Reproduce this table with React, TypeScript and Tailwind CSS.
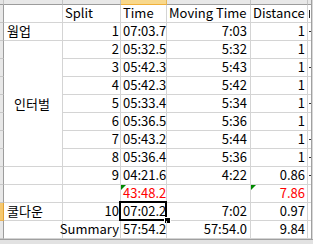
import React from 'react';

type Row = {
  a?: { text: string; kind: 'cell' | 'merge' } | null;
  b: string;
  c: string;
  d: string;
  e: string;
  f: 'dash' | '';
  red?: boolean;
  selected?: boolean;
};

const rows: Row[] = [
  { a: { text: '웜업', kind: 'cell' }, b: '1', c: '07:03.7', d: '7:03', e: '1', f: 'dash' },
  { a: { text: '인터벌', kind: 'merge' }, b: '2', c: '05:32.5', d: '5:32', e: '1', f: '' },
  { a: null, b: '3', c: '05:42.3', d: '5:43', e: '1', f: 'dash' },
  { a: null, b: '4', c: '05:42.3', d: '5:42', e: '1', f: '' },
  { a: null, b: '5', c: '05:33.4', d: '5:34', e: '1', f: 'dash' },
  { a: null, b: '6', c: '05:36.5', d: '5:36', e: '1', f: '' },
  { a: null, b: '7', c: '05:43.2', d: '5:44', e: '1', f: 'dash' },
  { a: null, b: '8', c: '05:36.4', d: '5:36', e: '1', f: 'dash' },
  { a: { text: '', kind: 'cell' }, b: '9', c: '04:21.6', d: '4:22', e: '0.86', f: 'dash' },
  { a: { text: '', kind: 'cell' }, b: '', c: '43:48.2', d: '', e: '7.86', f: '', red: true },
  { a: { text: '쿨다운', kind: 'cell' }, b: '10', c: '07:02.2', d: '7:02', e: '0.97', f: '', selected: true },
  { a: { text: '', kind: 'cell' }, b: 'Summary', c: '57:54.2', d: '57:54.0', e: '9.84', f: '' },
];

const cell =
  'flex items-end pb-[2px] border-r border-b border-[#d4d4d4] whitespace-nowrap leading-[14px]';

function Triangle() {
  return (
    <span className="absolute left-0 top-0 w-0 h-0 border-t-[5px] border-r-[5px] border-t-[#008a00] border-r-transparent" />
  );
}

export default function App() {
  return (
    <div className="w-[313px] h-[244px] overflow-hidden bg-white text-black font-['Noto_Sans_CJK_KR',sans-serif] text-[13px]">
      <div className="grid grid-cols-[4px_59px_58px_46px_84px_57px_3px_2px] grid-rows-[5px_18px_repeat(12,18px)_6px]">
        {/* top header strip */}
        <div className="bg-[#e4e4e4] border-r border-b border-r-[#c4c4c4] border-b-[#9c9c9c]" />
        <div className="bg-[#e8e8e8] border-r border-b border-r-[#c4c4c4] border-b-[#9c9c9c]" />
        <div className="bg-[#e8e8e8] border-r border-b border-r-[#c4c4c4] border-b-[#9c9c9c]" />
        <div className="bg-[#f8d88c] border-r border-b border-r-[#e8b856] border-b-[#f0b03a]" />
        <div className="bg-[#e8e8e8] border-r border-b border-r-[#c4c4c4] border-b-[#9c9c9c]" />
        <div className="bg-[#e8e8e8] border-r border-b border-r-[#c4c4c4] border-b-[#9c9c9c]" />
        <div className="bg-[#e8e8e8] border-b border-b-[#9c9c9c]" />
        <div className="bg-[#d8d8d8] border-l border-l-[#a0a0a0]" />

        {/* column header row */}
        <div className="bg-[#e8e8e8] border-r border-b border-r-[#9c9c9c] border-b-[#c4c4c4]" />
        <div className={cell} />
        <div className={`${cell} pl-[2px]`}>Split</div>
        <div className={`${cell} pl-[2px]`}>Time</div>
        <div className={`${cell} pl-[2px]`}>Moving Time</div>
        <div className={`${cell} pl-[2px]`}>Distance</div>
        <div className="flex items-center overflow-hidden border-b border-[#d4d4d4] pl-[1px] pt-[1px]">
          <span className="block w-[1px] h-[8px] bg-[#222]" />
        </div>
        <div className="bg-[#d8d8d8] border-l border-l-[#a0a0a0]" />

        {rows.map((r, i) => (
          <React.Fragment key={i}>
            {r.selected ? (
              <div className="bg-[#f6c86e] border-r border-b border-r-[#e2a234] border-b-[#e8b45a]" />
            ) : (
              <div className="bg-[#e8e8e8] border-r border-b border-r-[#9c9c9c] border-b-[#c8c8c8]" />
            )}
            {r.a &&
              (r.a.kind === 'merge' ? (
                <div className="row-span-7 flex items-center justify-center border-r border-b border-[#d4d4d4] whitespace-nowrap leading-[14px] pr-[2px]">
                  {r.a.text}
                </div>
              ) : (
                <div className={`${cell} pl-[3px]`}>{r.a.text}</div>
              ))}
            <div className={`${cell} justify-end pr-[1px]`}>{r.b}</div>
            <div className={`${cell} relative pl-[2px] ${r.red ? 'text-[#ff0000]' : ''}`}>
              {r.red && <Triangle />}
              {r.c}
              {r.selected && (
                <>
                  <span className="absolute left-[-2px] top-[-2px] right-[-1px] bottom-[-1px] border-2 border-black" />
                  <span className="absolute right-[-5px] bottom-[-4px] w-[7px] h-[7px] bg-black border border-white" />
                </>
              )}
            </div>
            <div className={`${cell} justify-end pr-[3px]`}>{r.d}</div>
            <div className={`${cell} relative justify-end pr-[2px] ${r.red ? 'text-[#ff0000]' : ''}`}>
              {r.red && <Triangle />}
              {r.e}
            </div>
            <div className="flex items-center border-b border-[#d4d4d4] pl-[1px]">
              {r.f === 'dash' && <span className="block w-[2px] h-[1px] bg-[#333]" />}
            </div>
            <div className="bg-[#d8d8d8] border-l border-l-[#a0a0a0]" />
          </React.Fragment>
        ))}

        {/* bottom frame */}
        <div className="col-span-8 bg-[#e2e2e2] border-t border-t-[#a0a0a0]" />
      </div>
    </div>
  );
}
